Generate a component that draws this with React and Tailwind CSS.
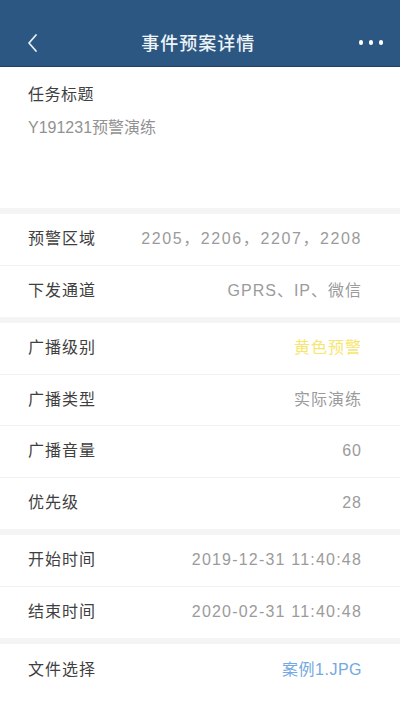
import React from "react";

const font = { fontFamily: '"Liberation Sans", "Noto Sans CJK SC", sans-serif' };

function Row({ label, value, valueClass = "text-[#9b9b9b] tracking-[1px]", last = false }) {
  return (
    <div
      className={`flex h-[51.5px] items-center justify-between pl-[28px] pr-[38px] ${
        last ? "" : "border-b border-[#f1f1f1]"
      }`}
    >
      <span className="text-[16px] tracking-[1px] text-[#3f3f3f]">{label}</span>
      <span className={`text-[16px] ${valueClass}`}>{value}</span>
    </div>
  );
}

function Band() {
  return <div className="h-[6px] bg-[#f4f4f4]" />;
}

export default function App() {
  return (
    <div className="min-h-[711px] w-[400px] bg-white" style={font}>
      <div className="bg-[#2b5782] pt-[22px] border-b border-[#1e4266]">
        <div className="flex h-[44px] items-center justify-between pl-[26px] pr-[17px]">
          <svg width="14" height="20" viewBox="0 0 14 20" className="-mt-[2px]">
            <path d="M10 2 L3 10 L10 18" fill="none" stroke="#e6eef6" strokeWidth="1.8" strokeLinecap="round" strokeLinejoin="round" />
          </svg>
          <span className="text-[18px] font-medium tracking-[1px] text-[#eef3f8] -ml-[2px]">事件预案详情</span>
          <div className="flex items-center gap-[5.5px] -mt-[3px]">
            <span className="h-[4.5px] w-[4.5px] rounded-full bg-white" />
            <span className="h-[4.5px] w-[4.5px] rounded-full bg-white" />
            <span className="h-[4.5px] w-[4.5px] rounded-full bg-white" />
          </div>
        </div>
      </div>

      <div className="h-[141px] pl-[28px] pt-[16px]">
        <div className="text-[16px] leading-[24px] tracking-[0.5px] text-[#3f3f3f]">任务标题</div>
        <div className="mt-[9px] text-[16px] leading-[24px] text-[#929292]">Y191231预警演练</div>
      </div>

      <Band />
      <Row label="预警区域" value="2205，2206，2207，2208" valueClass="text-[#9b9b9b] tracking-[1.6px]" />
      <Row label="下发通道" value="GPRS、IP、微信" last />
      <Band />
      <Row label="广播级别" value="黄色预警" valueClass="text-[#f7e66e] tracking-[1px]" />
      <Row label="广播类型" value="实际演练" />
      <Row label="广播音量" value="60" />
      <Row label="优先级" value="28" last />
      <Band />
      <Row label="开始时间" value="2019-12-31 11:40:48" valueClass="text-[#9b9b9b] tracking-[1.2px]" />
      <Row label="结束时间" value="2020-02-31 11:40:48" valueClass="text-[#9b9b9b] tracking-[1.2px]" last />
      <Band />
      <Row label="文件选择" value="案例1.JPG" valueClass="text-[#72a9e0] tracking-[0.5px]" last />
    </div>
  );
}
